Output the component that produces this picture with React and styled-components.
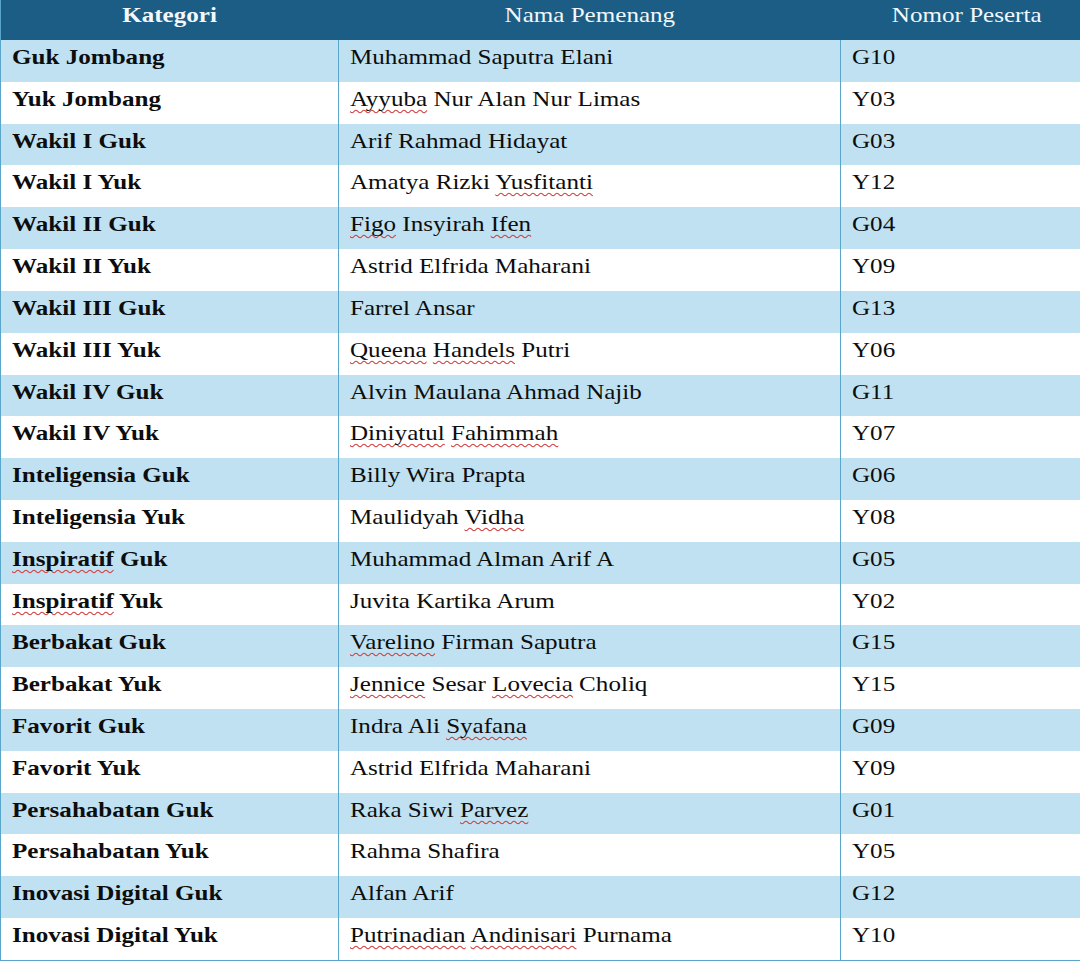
import React from "react";
import styled, { createGlobalStyle } from "styled-components";

const Global = createGlobalStyle`
  html, body { margin: 0; padding: 0; background: #ffffff; }
  body { font-family: "Liberation Serif", "Times New Roman", serif; overflow: hidden; }
`;

const Table = styled.div`
  width: 1092px;
  display: grid;
  grid-template-columns: 338px 502px 252px;
  border-bottom: 1px solid #5aa6cb;
  border-left: 1px solid #5aa6cb;
`;

const HeadCell = styled.div`
  height: 40px;
  background: #1b5d85;
  color: #f2f8fb;
  font-size: 22px;
  font-weight: ${(p) => (p.$bold ? 700 : 400)};
  line-height: 30px;
  text-align: center;
  box-sizing: border-box;
`;

const Cell = styled.div`
  height: 41.82px;
  box-sizing: border-box;
  background: ${(p) => (p.$alt ? "#bfe1f2" : "#ffffff")};
  border-right: ${(p) => (p.$last ? "none" : "1px solid #5aa6cb")};
  padding: 2px 0 0 11px;
  font-size: 22px;
  line-height: 30px;
  color: #0d0d0d;
  font-weight: ${(p) => (p.$bold ? 700 : 400)};
  white-space: nowrap;
`;

const Wide = styled.span`
  display: inline-block;
  transform: scaleX(1.14);
  transform-origin: ${(p) => (p.$center ? "center" : "left")} center;
`;

const Miss = styled.span`
  text-decoration: underline wavy #d23a3a;
  text-decoration-thickness: 1px;
  text-underline-offset: 3px;
  text-decoration-skip-ink: none;
`;

const rows = [
  ["Guk Jombang", "Muhammad Saputra Elani", "G10"],
  ["Yuk Jombang", "[Ayyuba] Nur Alan Nur Limas", "Y03"],
  ["Wakil I Guk", "Arif Rahmad Hidayat", "G03"],
  ["Wakil I Yuk", "Amatya Rizki [Yusfitanti]", "Y12"],
  ["Wakil II Guk", "[Figo] Insyirah [Ifen]", "G04"],
  ["Wakil II Yuk", "Astrid Elfrida Maharani", "Y09"],
  ["Wakil III Guk", "Farrel Ansar", "G13"],
  ["Wakil III Yuk", "[Queena] [Handels] Putri", "Y06"],
  ["Wakil IV Guk", "Alvin Maulana Ahmad Najib", "G11"],
  ["Wakil IV Yuk", "[Diniyatul] [Fahimmah]", "Y07"],
  ["Inteligensia Guk", "Billy Wira Prapta", "G06"],
  ["Inteligensia Yuk", "Maulidyah [Vidha]", "Y08"],
  ["[Inspiratif] Guk", "Muhammad Alman Arif A", "G05"],
  ["[Inspiratif] Yuk", "Juvita Kartika Arum", "Y02"],
  ["Berbakat Guk", "[Varelino] Firman Saputra", "G15"],
  ["Berbakat Yuk", "[Jennice] Sesar [Lovecia] Choliq", "Y15"],
  ["Favorit Guk", "Indra Ali [Syafana]", "G09"],
  ["Favorit Yuk", "Astrid Elfrida Maharani", "Y09"],
  ["Persahabatan Guk", "Raka Siwi [Parvez]", "G01"],
  ["Persahabatan Yuk", "Rahma Shafira", "Y05"],
  ["Inovasi Digital Guk", "Alfan Arif", "G12"],
  ["Inovasi Digital Yuk", "[Putrinadian] [Andinisari] Purnama", "Y10"],
];

function Txt({ s }) {
  const parts = s.split(/(\[[^\]]+\])/).filter(Boolean);
  return (
    <Wide>
      {parts.map((p, i) =>
        p.startsWith("[") ? <Miss key={i}>{p.slice(1, -1)}</Miss> : <React.Fragment key={i}>{p}</React.Fragment>
      )}
    </Wide>
  );
}

export default function App() {
  return (
    <>
      <Global />
      <Table>
        <HeadCell $bold><Wide $center>Kategori</Wide></HeadCell>
        <HeadCell><Wide $center>Nama Pemenang</Wide></HeadCell>
        <HeadCell><Wide $center>Nomor Peserta</Wide></HeadCell>
        {rows.map((r, i) => (
          <React.Fragment key={i}>
            <Cell $alt={i % 2 === 0} $bold><Txt s={r[0]} /></Cell>
            <Cell $alt={i % 2 === 0}><Txt s={r[1]} /></Cell>
            <Cell $alt={i % 2 === 0} $last><Txt s={r[2]} /></Cell>
          </React.Fragment>
        ))}
      </Table>
    </>
  );
}
